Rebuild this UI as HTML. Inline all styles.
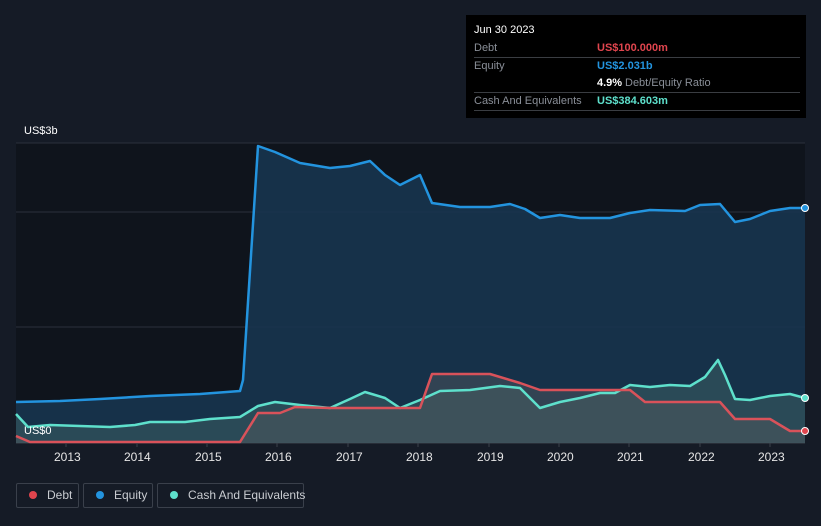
<html><head><style>
html,body{margin:0;width:821px;height:526px;background:#151b26;font-family:"Liberation Sans",sans-serif;overflow:hidden;position:relative}
.t{position:absolute;color:#fff;font-size:11px}
.ax{position:absolute;top:450px;color:#e6e6e6;font-size:12px}
.tip{position:absolute;left:466px;top:15px;width:340px;height:103px;background:#000;}
.tip .r{position:absolute;left:8px;width:326px;font-size:11px;color:#8a8f98;border-bottom:1px solid #3a3d42;height:17px;line-height:17px;white-space:nowrap}
.lg{position:absolute;top:483px;height:25px;border:1px solid #3a404b;border-radius:2px;color:#c9ccd1;font-size:12px;line-height:23px;box-sizing:border-box;white-space:nowrap}
.lg i{display:inline-block;width:8px;height:8px;border-radius:50%;margin:0 10px 0 12px;vertical-align:0px}
</style></head><body>
<svg width="821" height="526" style="position:absolute;left:0;top:0">
<rect x="16" y="143" width="789" height="300" fill="#0f141c"/>
<line x1="16" y1="143" x2="805" y2="143" stroke="#2b313c"/>
<line x1="16" y1="212" x2="805" y2="212" stroke="#2b313c"/>
<line x1="16" y1="327" x2="805" y2="327" stroke="#2b313c"/>
<line x1="16" y1="443" x2="805" y2="443" stroke="#3a404b"/>
<path d="M16,402 L60,401 100,399 150,396 200,394 240,391 243,380 258,146 275,152 300,163 330,168 350,166 370,161 385,175 400,185 410,180 420,175 432,203 460,207 490,207 510,204 525,209 540,218 560,215 580,218 610,218 630,213 650,210 685,211 700,205 720,204 735,222 750,219 770,211 790,208 805,208 L805,443 16,443Z" fill="#17344f" fill-opacity="0.9"/>
<path d="M16,414 L28,427 50,425 80,426 110,427 135,425 150,422 185,422 210,419 240,417 258,406 275,402 300,405 330,408 350,399 365,392 385,398 400,408 420,400 440,391 470,390 500,386 520,388 540,408 560,402 580,398 600,393 615,393 630,385 650,387 670,385 690,386 705,377 718,360 725,375 735,399 750,400 770,396 790,394 805,398 L805,443 16,443Z" fill="#3c5f63" fill-opacity="0.55"/>
<path d="M16,436 L30,442 240,442 258,413 280,413 295,407 330,408 420,408 432,374 490,374 520,383 540,390 630,390 645,402 720,402 735,419 770,419 790,431 805,431 L805,443 16,443Z" fill="#555a60" fill-opacity="0.45"/>
<path d="M16,402 L60,401 100,399 150,396 200,394 240,391 243,380 258,146 275,152 300,163 330,168 350,166 370,161 385,175 400,185 410,180 420,175 432,203 460,207 490,207 510,204 525,209 540,218 560,215 580,218 610,218 630,213 650,210 685,211 700,205 720,204 735,222 750,219 770,211 790,208 805,208" fill="none" stroke="#2394df" stroke-width="2.5" stroke-linejoin="round"/>
<path d="M16,414 L28,427 50,425 80,426 110,427 135,425 150,422 185,422 210,419 240,417 258,406 275,402 300,405 330,408 350,399 365,392 385,398 400,408 420,400 440,391 470,390 500,386 520,388 540,408 560,402 580,398 600,393 615,393 630,385 650,387 670,385 690,386 705,377 718,360 725,375 735,399 750,400 770,396 790,394 805,398" fill="none" stroke="#5ee0cc" stroke-width="2.5" stroke-linejoin="round"/>
<path d="M16,436 L30,442 240,442 258,413 280,413 295,407 330,408 420,408 432,374 490,374 520,383 540,390 630,390 645,402 720,402 735,419 770,419 790,431 805,431" fill="none" stroke="#d9525a" stroke-width="2.5" stroke-linejoin="round"/>
<circle cx="805" cy="208" r="3.5" fill="#2394df" stroke="#fff" stroke-width="1"/>
<circle cx="805" cy="398" r="3.5" fill="#5ee0cc" stroke="#fff" stroke-width="1"/>
<circle cx="805" cy="431" r="3.5" fill="#e0454e" stroke="#fff" stroke-width="1"/>
<g stroke="#3a404b"><line x1="66" y1="443" x2="66" y2="447"/><line x1="137" y1="443" x2="137" y2="447"/><line x1="207" y1="443" x2="207" y2="447"/><line x1="277" y1="443" x2="277" y2="447"/><line x1="348" y1="443" x2="348" y2="447"/><line x1="418" y1="443" x2="418" y2="447"/><line x1="489" y1="443" x2="489" y2="447"/><line x1="559" y1="443" x2="559" y2="447"/><line x1="629" y1="443" x2="629" y2="447"/><line x1="700" y1="443" x2="700" y2="447"/><line x1="770" y1="443" x2="770" y2="447"/></g>
</svg>
<div class="t" style="left:24px;top:125px">US$3b</div>
<div class="t" style="left:24px;top:425px">US$0</div>
<div class="ax" style="left:54px">2013</div><div class="ax" style="left:124px">2014</div><div class="ax" style="left:195px">2015</div><div class="ax" style="left:265px">2016</div><div class="ax" style="left:336px">2017</div><div class="ax" style="left:406px">2018</div><div class="ax" style="left:477px">2019</div><div class="ax" style="left:547px">2020</div><div class="ax" style="left:617px">2021</div><div class="ax" style="left:688px">2022</div><div class="ax" style="left:758px">2023</div>
<div class="tip">
<div style="position:absolute;left:8px;top:9px;color:#fff;font-size:11px">Jun 30 2023</div>
<div class="r" style="top:25px">Debt<span style="position:absolute;left:123px;color:#e0454e;font-weight:bold">US$100.000m</span></div>
<div class="r" style="top:43px;border:none">Equity<span style="position:absolute;left:123px;color:#2394df;font-weight:bold">US$2.031b</span></div>
<div class="r" style="top:60px"><span style="position:absolute;left:123px;color:#fff;font-weight:bold">4.9%</span><span style="position:absolute;left:151px;color:#8a8f98">Debt/Equity Ratio</span></div>
<div class="r" style="top:78px">Cash And Equivalents<span style="position:absolute;left:123px;color:#5ee0cc;font-weight:bold">US$384.603m</span></div>
</div>
<div class="lg" style="left:16px;width:63px"><i style="background:#e0454e"></i>Debt</div>
<div class="lg" style="left:83px;width:70px"><i style="background:#2394df"></i>Equity</div>
<div class="lg" style="left:157px;width:147px"><i style="background:#5ee0cc"></i>Cash And Equivalents</div>
</body></html>
